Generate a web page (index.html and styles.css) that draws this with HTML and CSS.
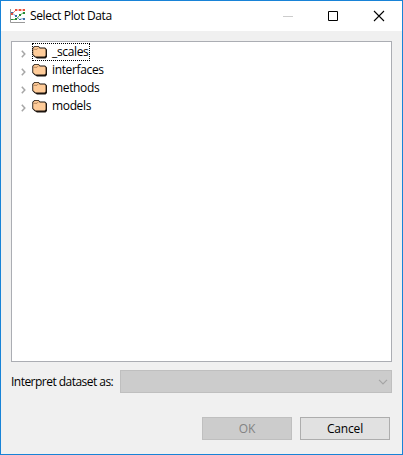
FILE: index.html
```html
<!DOCTYPE html>
<html lang="en">
<head>
<meta charset="utf-8">
<title>Select Plot Data</title>
<link rel="stylesheet" href="styles.css">
</head>
<body>
<svg class="defs" width="0" height="0">
  <symbol id="folder" viewBox="0 0 16 14">
    <path d="M2.500 1h4l1.500 1.500h5l2 2V12l-1.500 1.500H5L2.500 12 .3 9.800V3z" fill="#1c140e"/>
    <path d="M1.200 3.200L2.800 1.700h3.500l1.500 1.700h4.800l1 1V10.500l-1 1H3.500L1.200 9.500z" fill="#ffcc99"/>
    <path d="M1.500 4.300h3.500l1.300-1.400" fill="none" stroke="#a0744f" stroke-width=".8"/>
  </symbol>
  <symbol id="chevron" viewBox="0 0 5 8">
    <path d="M.8.700L3.800 4 .8 7.300" fill="none" stroke="#a6a6a6" stroke-width="1.500"/>
  </symbol>
</svg>
<div class="window">
  <header class="titlebar">
    <svg class="logo" width="16" height="16" viewBox="0 0 16 16">
      <path d="M1.500 1v13.500H16" fill="none" stroke="#999"/>
      <g fill="none" stroke-width="1">
        <path d="M3 6l4-4h7.500" stroke="#f0806c"/>
        <path d="M3 5l4 3 3.500 3.500 4-1" stroke="#7ba5d2"/>
        <path d="M3 11.500h4l3.500-4 4-3" stroke="#62b562"/>
      </g>
      <path d="M2 5h2v2H2zM6 1h2v2H6zM10 1h2v2h-2zM14 1h2v2h-2z" fill="#e8503f"/>
      <path d="M2 4h2v1H2zM6 7h2v2H6zM10 11h2v1h-2zM14 10h2v2h-2z" fill="#386eaa"/>
      <path d="M2 11h2v1H2zM6 10h2v2H6zM10 6h2v2h-2zM14 4h2v2h-2z" fill="#238b35"/>
    </svg>
    <span class="title">Select Plot Data</span>
    <svg class="controls" width="100" height="10" viewBox="0 0 100 10">
      <path d="M0 5.500h10" stroke="#ccc"/>
      <path d="M45.500.500h9v9h-9z" fill="none" stroke="#000"/>
      <path d="M91 0l10 10M101 0L91 10" stroke="#000" stroke-width="1.100"/>
    </svg>
  </header>
  <main class="content">
    <div class="tree">
      <div class="row"><svg class="chevron"><use href="#chevron"/></svg><div class="item focused"><svg class="folder"><use href="#folder"/></svg><span>_scales</span></div></div>
      <div class="row"><svg class="chevron"><use href="#chevron"/></svg><div class="item"><svg class="folder"><use href="#folder"/></svg><span>interfaces</span></div></div>
      <div class="row"><svg class="chevron"><use href="#chevron"/></svg><div class="item"><svg class="folder"><use href="#folder"/></svg><span>methods</span></div></div>
      <div class="row"><svg class="chevron"><use href="#chevron"/></svg><div class="item"><svg class="folder"><use href="#folder"/></svg><span>models</span></div></div>
    </div>
    <div class="field">
      <span class="label">Interpret dataset as:</span>
      <div class="combo"><svg width="10" height="6" viewBox="0 0 10 6"><path d="M1 .8l4 4 4-4" fill="none" stroke="#a5a5a5" stroke-width="1.200"/></svg></div>
    </div>
    <footer class="actions">
      <button class="button" disabled>OK</button>
      <button class="button">Cancel</button>
    </footer>
  </main>
</div>
</body>
</html>
```
FILE: styles.css
```css
* { box-sizing: border-box; }
body { margin: 0; font: 12px/18px "Open Sans", "Noto Sans", sans-serif; color: #000; letter-spacing: -0.35px; }
.defs { position: absolute; }
.window { width: 403px; height: 455px; border: 1px solid #1883d7; background: #f0f0f0; }
.titlebar { height: 30px; background: #fff; display: flex; align-items: center; padding-left: 8px; }
.logo { flex: none; }
.title { margin-left: 5px; white-space: nowrap; }
.controls { margin-left: auto; margin-right: 19px; flex: none; overflow: visible; }
.content { padding: 10px; }
.tree { width: 381px; height: 321px; border: 1px solid #abadb3; background: #fff; padding-top: 1px; }
.row { height: 18px; display: flex; padding-left: 9px; }
.chevron { width: 5px; height: 8px; margin: 7px 6px 0 0; flex: none; }
.item { height: 18px; display: flex; border: 1px solid transparent; line-height: 16px; padding-right: 1px; }
.item.focused { width: 58px; border: 1px dotted #000; }
.folder { width: 16px; height: 14px; margin: 1px 3px 0 -1px; flex: none; }
.item span { margin-left: 1px; }
.field { display: flex; margin-top: 8px; height: 23px; }
.label { width: 109px; line-height: 23px; white-space: nowrap; letter-spacing: -0.53px; }
.combo { width: 272px; height: 23px; border: 1px solid #bfbfbf; background: #ccc; display: flex; justify-content: flex-end; align-items: center; padding-right: 3px; }
.actions { display: flex; gap: 8px; margin-top: 24px; padding-left: 191px; }
.button { width: 90px; height: 23px; border: 1px solid #adadad; background: #e1e1e1; padding: 0; font: inherit; letter-spacing: -0.15px; line-height: 21px; color: #000; }
.button:disabled { border-color: #bfbfbf; background: #ccc; color: #838383; }
```
